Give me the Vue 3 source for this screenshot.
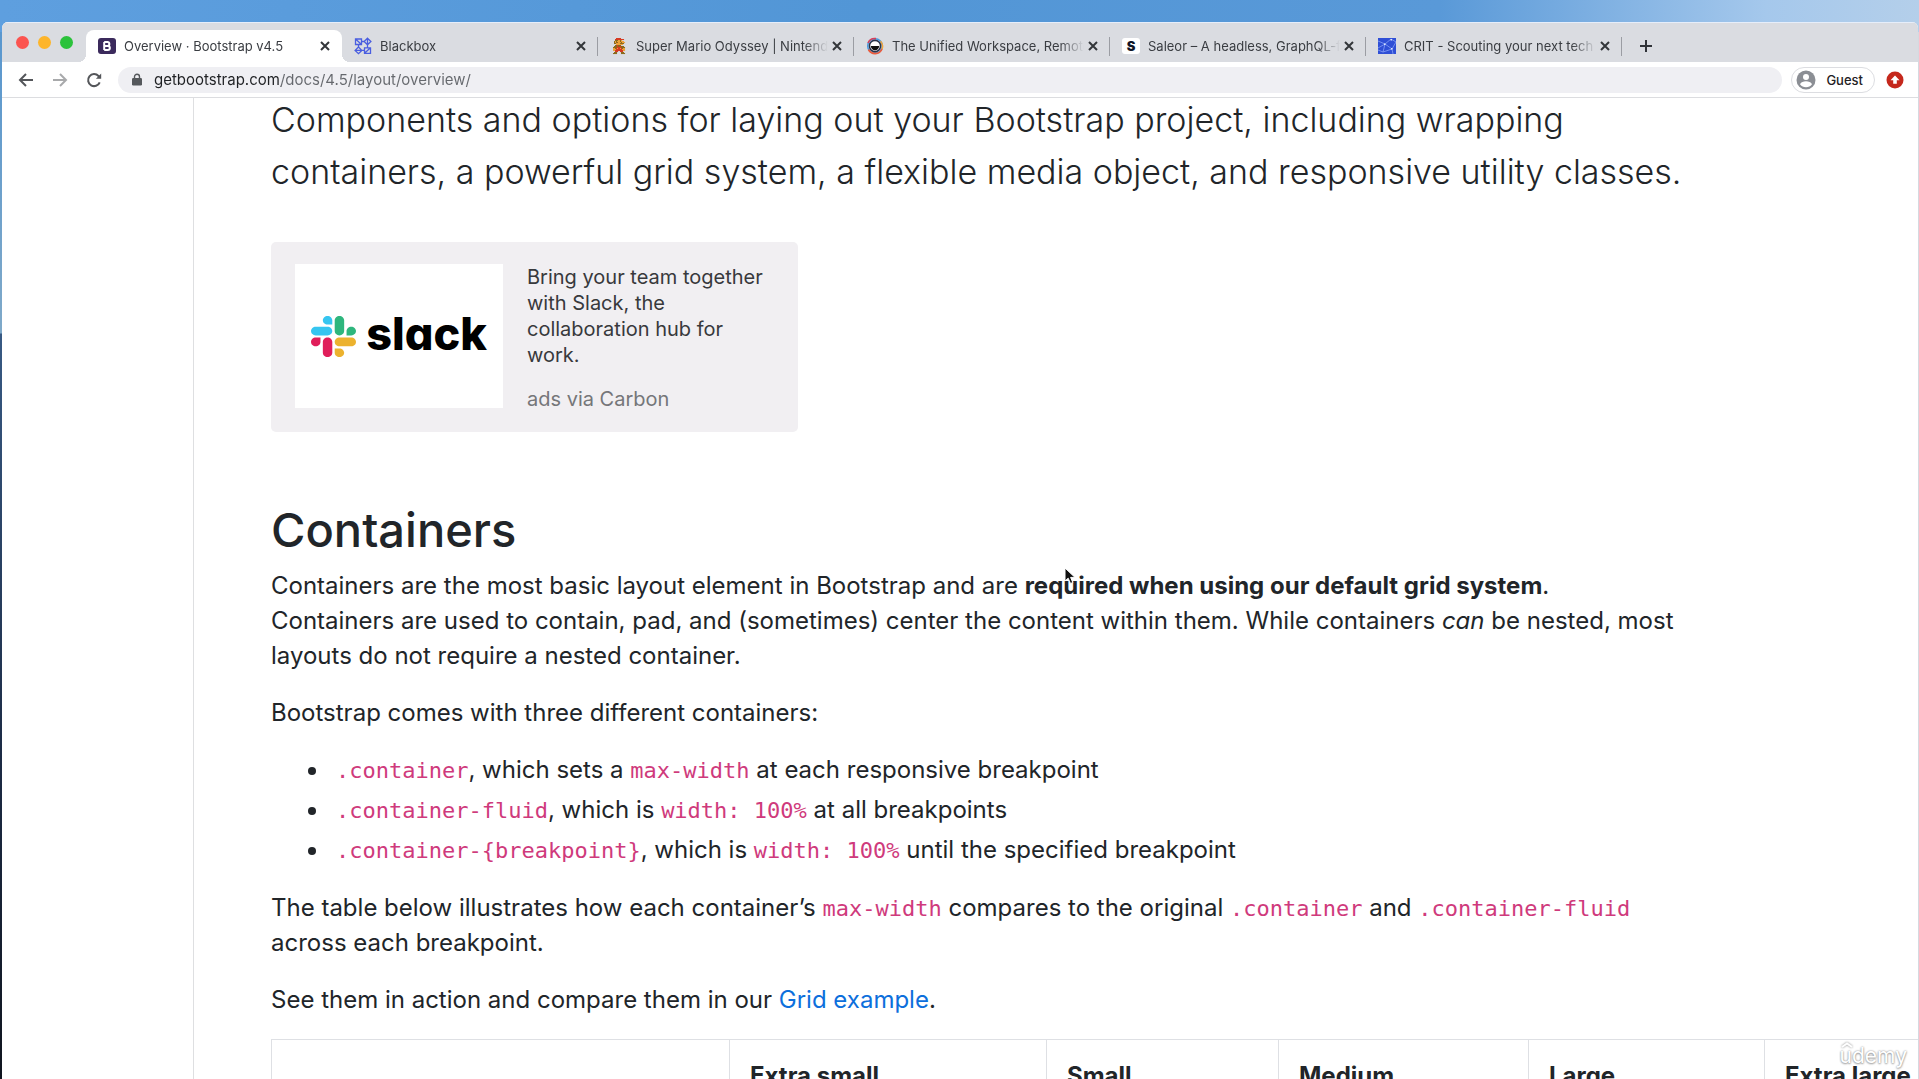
<script setup>
import { ref } from 'vue'

const address = ref('getbootstrap.com/docs/4.5/layout/overview/')

const tabs = [
  { icon: 'bootstrap', title: 'Overview · Bootstrap v4.5', active: true },
  { icon: 'blackbox', title: 'Blackbox' },
  { icon: 'mario', title: 'Super Mario Odyssey | Nintendo' },
  { icon: 'station', title: 'The Unified Workspace, Remote' },
  { icon: 'saleor', title: 'Saleor – A headless, GraphQL-first' },
  { icon: 'crit', title: 'CRIT - Scouting your next tech ta' },
]

const breakpoints = ['Extra small', 'Small', 'Medium', 'Large', 'Extra large']

// Sprite rows for the Mario favicon: r = red, s = skin, b = brown
const sprite = [
  '...rrrrr....',
  '..rrrrrrrrr.',
  '..bbbssbs...',
  '.bsbsssbsss.',
  '.bsbbsssbsss',
  '.bbssssbbbb.',
  '...sssssss..',
  '..bbrbbb....',
  '.bbbrbbrbbb.',
  'bbbbrrrrbbbb',
  'ssbrsrrsrbss',
  'sssrrrrrrsss',
  'ssrrrrrrrrss',
  '..rrr..rrr..',
  '.bbb....bbb.',
  'bbbb....bbbb',
]
const inks = { r: '#d63a22', s: '#eda13a', b: '#8a6a1c' }
const pixels = sprite.flatMap((row, y) =>
  [...row].map((c, x) => ({ x, y, fill: inks[c] })).filter((p) => p.fill),
)
</script>

<template>
  <div class="desktop">
    <div class="window">
      <header class="chrome">
        <div class="tab-strip">
          <div class="lights">
            <button class="light red" aria-label="Close window"></button>
            <button class="light yellow" aria-label="Minimize window"></button>
            <button class="light green" aria-label="Zoom window"></button>
          </div>
          <div v-for="tab in tabs" :key="tab.icon" class="tab" :class="{ active: tab.active }">
            <button class="tab-select">
              <svg v-if="tab.icon === 'bootstrap'" class="favicon" viewBox="0 0 18 18">
                <rect y="1" width="18" height="16" rx="3" fill="#3b2a5c" />
                <path d="M6.2 5v8M6.2 5h3.2a1.9 1.9 0 0 1 0 3.9H6.2h3.6a2 2 0 0 1 0 4.1H6.2" fill="none" stroke="#fff" stroke-width="2" />
              </svg>
              <svg v-else-if="tab.icon === 'blackbox'" class="favicon" viewBox="0 0 18 18" fill="none" stroke="#4a5ee0" stroke-width="1.3">
                <path d="M1.5 2h6v5.500h-6zM1.500 2l6 5.500M13.500 1.200l3.400 3.300-3.400 3.300-3.400-3.300zM13.500 1.200v6.600M4.500 10l3.300 3.400-3.300 3.200-3.400-3.200zM1 13.400h7M10.500 10.800h6v5.500h-6zM16.500 10.800l-6 5.500M7.500 4.500h2.600M7.800 13.400h2.700M4.500 7.500v2.500M13.500 7.800v3" />
              </svg>
              <svg v-else-if="tab.icon === 'mario'" class="favicon" viewBox="-3 0 18 16">
                <rect v-for="p in pixels" :key="p.x + '-' + p.y" :x="p.x" :y="p.y" width="1.05" height="1.05" :fill="p.fill" />
              </svg>
              <svg v-else-if="tab.icon === 'station'" class="favicon" viewBox="0 0 18 18">
                <circle cx="9" cy="9" r="7.300" fill="#fff" stroke="#4a9be0" stroke-width="1.600" />
                <path d="M2 6A7.500 7.500 0 0 1 10 1.600" fill="none" stroke="#d8405c" stroke-width="1.600" />
                <path d="M2.500 12.500A7.500 7.500 0 0 0 16 12" fill="none" stroke="#ec5b3c" stroke-width="1.800" />
                <path d="M14.500 4.200A7.500 7.500 0 0 1 16 12" fill="none" stroke="#f3a63a" stroke-width="1.600" />
                <circle cx="9" cy="9" r="5.600" fill="#fff" stroke="#29324a" stroke-width="1.600" />
                <path d="M4.800 9h8.400a4.200 4.200 0 0 1-8.400 0z" fill="#111" />
              </svg>
              <span v-else-if="tab.icon === 'saleor'" class="favicon letter">S</span>
              <svg v-else class="favicon" viewBox="0 0 18 18">
                <rect y="1" width="18" height="16" fill="#2f4fd6" />
                <path d="M0 4l7 3 6-5M7 7l-2 8M7 7l7 5 4-7M14 12l-9 3-5-2M14 12l1 5M7 7L0 11M13 2l5 3" fill="none" stroke="#86a0f5" stroke-width=".8" />
                <path d="M6 6.500h1.500v1.500H6zM13 11h1.500v1.500H13zM12.500 2H14v1.500h-1.500z" fill="#dfe6ff" />
              </svg>
              <span class="tab-title">{{ tab.title }}</span>
            </button>
            <button class="tab-close" aria-label="Close tab">
              <svg viewBox="0 0 10 10"><path d="M1 1l8 8M9 1l-8 8" /></svg>
            </button>
          </div>
          <button class="new-tab" aria-label="New tab">
            <svg viewBox="0 0 14 14"><path d="M7 1v12M1 7h12" /></svg>
          </button>
        </div>

        <div class="toolbar">
          <nav class="nav-buttons">
            <button aria-label="Back">
              <svg viewBox="0 0 16 16"><path d="M15 8H2M8 2L2 8l6 6" /></svg>
            </button>
            <button class="faded" aria-label="Forward">
              <svg viewBox="0 0 16 16"><path d="M1 8h13M8 2l6 6-6 6" /></svg>
            </button>
            <button aria-label="Reload">
              <svg viewBox="0 0 16 16">
                <path d="M13.700 10.300A6 6 0 1 1 12.500 4L14 5.500" />
                <path d="M15.200 1.500v5.300H9.900z" fill="#54565a" stroke="none" />
              </svg>
            </button>
          </nav>
          <label class="omnibox">
            <svg class="lock" viewBox="0 0 10 13">
              <rect y="5" width="10" height="7.500" rx="1.200" fill="#55585c" />
              <path d="M2.500 5.500V3.700a2.500 2.500 0 0 1 5 0v1.800" fill="none" stroke="#55585c" stroke-width="1.400" />
            </svg>
            <input v-model="address" type="text" aria-label="Address" spellcheck="false" />
          </label>
          <button class="profile">
            <svg viewBox="0 0 20 20">
              <circle cx="10" cy="10" r="9.500" fill="#8b8e94" />
              <circle cx="10" cy="7" r="3" fill="#fff" />
              <path d="M4 14.200c1-2.300 3.500-3 6-3s5 .7 6 3a7.300 7.300 0 0 1-12 0z" fill="#fff" />
            </svg>
            Guest
          </button>
          <button class="update" aria-label="Update browser">
            <svg viewBox="0 0 18 18">
              <circle cx="9" cy="9" r="8.500" fill="#c5281c" />
              <path d="M9 4.500l4.500 4.700h-2.700v3.600H7.200V9.200H4.500z" fill="#fff" />
            </svg>
          </button>
        </div>
      </header>

      <div class="page">
        <aside class="sidebar"></aside>
        <main class="content">
          <p class="lead">
            Components and options for laying out your Bootstrap project, including wrapping<br />
            containers, a powerful grid system, a flexible media object, and responsive utility classes.
          </p>

          <section class="ad">
            <a class="ad-image" href="#" aria-label="Slack">
              <svg class="slack-mark" viewBox="0 0 122.800 122.800" preserveAspectRatio="none">
                <path fill="#E01E5A" d="M25.800 77.600c0 7.100-5.800 12.900-12.900 12.900S0 84.700 0 77.600s5.800-12.900 12.900-12.900h12.900zM32.300 77.600c0-7.100 5.800-12.900 12.900-12.900s12.900 5.800 12.900 12.900v32.300c0 7.100-5.800 12.900-12.900 12.900s-12.900-5.800-12.900-12.900z" />
                <path fill="#36C5F0" d="M45.200 25.800c-7.100 0-12.900-5.800-12.900-12.900S38.100 0 45.200 0s12.900 5.800 12.900 12.900v12.900zM45.200 32.300c7.100 0 12.900 5.800 12.900 12.900s-5.800 12.900-12.900 12.900H12.900C5.800 58.100 0 52.300 0 45.200s5.800-12.900 12.900-12.900z" />
                <path fill="#2EB67D" d="M97 45.200c0-7.100 5.800-12.900 12.900-12.900s12.900 5.800 12.900 12.900-5.800 12.900-12.900 12.900H97zM90.500 45.200c0 7.100-5.800 12.900-12.900 12.900s-12.900-5.800-12.900-12.900V12.900C64.700 5.800 70.500 0 77.600 0s12.900 5.800 12.900 12.900z" />
                <path fill="#ECB22E" d="M77.600 97c7.100 0 12.900 5.800 12.900 12.900s-5.800 12.900-12.900 12.900-12.900-5.800-12.900-12.900V97zM77.600 90.500c-7.100 0-12.900-5.800-12.900-12.900s5.800-12.900 12.900-12.900h32.300c7.100 0 12.900 5.800 12.900 12.900s-5.800 12.900-12.900 12.900z" />
              </svg>
              <span class="slack-word">slack</span>
            </a>
            <div class="ad-copy">
              <a class="ad-text" href="#">Bring your team together<br />with Slack, the<br />collaboration hub for<br />work.</a>
              <a class="ad-via" href="#">ads via Carbon</a>
            </div>
          </section>

          <h2>Containers</h2>
          <p>
            Containers are the most basic layout element in Bootstrap and are
            <strong>required when using our default grid system</strong>.<br />
            Containers are used to contain, pad, and (sometimes) center the content within them. While containers <em>can</em> be nested, most<br />
            layouts do not require a nested container.
          </p>
          <p>Bootstrap comes with three different containers:</p>
          <ul>
            <li><code>.container</code>, which sets a <code>max-width</code> at each responsive breakpoint</li>
            <li><code>.container-fluid</code>, which is <code>width: 100%</code> at all breakpoints</li>
            <li><code>.container-{breakpoint}</code>, which is <code>width: 100%</code> until the specified breakpoint</li>
          </ul>
          <p>
            The table below illustrates how each container’s <code>max-width</code> compares to the original
            <code>.container</code> and <code>.container-fluid</code><br />
            across each breakpoint.
          </p>
          <p>See them in action and compare them in our <a href="#">Grid example</a>.</p>

          <table>
            <colgroup>
              <col class="col-name" />
              <col class="col-xs" />
              <col class="col-sm" />
              <col class="col-md" />
              <col class="col-lg" />
              <col class="col-xl" />
            </colgroup>
            <thead>
              <tr>
                <td></td>
                <th v-for="name in breakpoints" :key="name" scope="col">{{ name }}</th>
              </tr>
            </thead>
          </table>
        </main>
      </div>
    </div>

    <svg class="pointer" viewBox="0 0 12 18">
      <path d="M1 1v13l3.200-2.800 2.300 5.300 2.300-1-2.200-5.100h4.400z" fill="#111" stroke="#fff" />
    </svg>
    <div class="watermark">
      <svg viewBox="0 0 12 6"><path d="M1 5l5-3.500L11 5" /></svg>
      udemy
    </div>
  </div>
</template>

<style>
body {
  margin: 0;
}
</style>

<style scoped>
.desktop {
  position: relative;
  box-sizing: border-box;
  height: 100vh;
  padding: 22px 1px 0 2px;
  overflow: hidden;
  font-family: Inter, 'Liberation Sans', sans-serif;
  color: #212529;
  background:
    linear-gradient(90deg, #5e9fdf, #5296d6 45%, #5999d8 75%, #a5c8ec 92%, #b4cfea) top / 100% 32px no-repeat,
    linear-gradient(90deg, transparent 50%, #d5d9e0 50%),
    linear-gradient(#5595cf 0, #7fa9c9 333px, #385a84 334px, #1c2b45 70%, #10151f);
}

button {
  padding: 0;
  border: 0;
  background: none;
  font: inherit;
  color: inherit;
}

svg {
  display: block;
}

a {
  color: #0d6fdc;
  text-decoration: none;
}

.window {
  display: flex;
  flex-direction: column;
  height: 100%;
  overflow: hidden;
  border-radius: 6px 6px 0 0;
  background: #fff;
}

.chrome {
  flex: none;
  border-bottom: 1px solid #dcdde0;
}

.tab-strip {
  display: flex;
  align-items: flex-end;
  height: 40px;
  background: #dadce1;
  box-shadow: inset 0 1px #e6eefa;
}

.lights {
  display: flex;
  gap: 9px;
  align-self: center;
  width: 70px;
  padding-left: 14px;
}

.light {
  width: 13px;
  height: 13px;
  border-radius: 50%;
}

.red {
  background: #fb5450;
}

.yellow {
  background: #fdb52b;
}

.green {
  background: #2bc23b;
}

.tab {
  position: relative;
  display: flex;
  align-items: center;
  flex: 0 1 256px;
  box-sizing: border-box;
  min-width: 0;
  height: 32px;
  padding: 0 12px;
}

.tab:not(.active)::after {
  content: '';
  position: absolute;
  top: 7px;
  right: 0;
  width: 1px;
  height: 19px;
  background: #9b9da3;
}

.tab.active {
  border-radius: 8px 8px 0 0;
  background: #fff;
}

.tab.active::before,
.tab.active::after {
  content: '';
  position: absolute;
  bottom: 0;
  width: 8px;
  height: 8px;
}

.tab.active::before {
  right: 100%;
  background: radial-gradient(circle at 0 0, transparent 8px, #fff 8px);
}

.tab.active::after {
  left: 100%;
  background: radial-gradient(circle at 100% 0, transparent 8px, #fff 8px);
}

.tab-select {
  display: flex;
  flex: 1;
  gap: 8px;
  align-items: center;
  min-width: 0;
  text-align: left;
}

.favicon {
  flex: none;
  width: 18px;
  height: 18px;
}

.letter {
  height: 16px;
  border-radius: 3px;
  background: #fff;
  color: #101426;
  font-size: 13px;
  font-weight: 900;
  line-height: 16px;
  text-align: center;
}

.tab-title {
  flex: 1;
  overflow: hidden;
  color: #3a3d42;
  font-size: 13px;
  font-weight: 400;
  line-height: 20px;
  white-space: nowrap;
  mask-image: linear-gradient(90deg, #000 calc(100% - 24px), transparent);
}

.tab-close {
  flex: none;
  width: 10px;
  margin-left: 4px;
}

.tab-close svg {
  width: 10px;
  height: 10px;
  fill: none;
  stroke: #33363a;
  stroke-width: 2;
}

.new-tab {
  align-self: center;
  margin-left: 17px;
  padding-top: 8px;
}

.new-tab svg {
  width: 14px;
  height: 14px;
  fill: none;
  stroke: #303338;
  stroke-width: 2;
}

.toolbar {
  display: flex;
  align-items: center;
  height: 35px;
  padding: 0 14px 0 16px;
}

.nav-buttons {
  display: flex;
  gap: 18px;
  margin-right: 16px;
}

.nav-buttons svg {
  width: 16px;
  height: 16px;
  fill: none;
  stroke: #54565a;
  stroke-width: 2;
}

.nav-buttons .faded {
  opacity: 0.5;
}

.omnibox {
  display: flex;
  flex: 1;
  align-items: center;
  gap: 12px;
  height: 26px;
  padding: 0 14px;
  border-radius: 13px;
  background: #efeff3;
}

.lock {
  width: 10px;
  height: 13px;
}

.omnibox input {
  flex: 1;
  min-width: 0;
  padding: 0;
  border: 0;
  outline: 0;
  /* host name dark, path lighter */
  background: linear-gradient(90deg, #1f2124 127px, #65686d 127px);
  background-clip: text;
  color: transparent;
  font: 400 15px/22px Inter, 'Liberation Sans', sans-serif;
}

.profile {
  display: flex;
  align-items: center;
  gap: 10px;
  height: 26px;
  margin: 0 11px 0 9px;
  padding: 0 11px 0 4px;
  border: 1px solid #dcdde1;
  border-radius: 13px;
  color: #1f2124;
  font-size: 13px;
  font-weight: 500;
}

.profile svg {
  width: 20px;
  height: 20px;
}

.update svg {
  width: 18px;
  height: 18px;
}

.page {
  display: flex;
  flex: 1;
  min-height: 0;
  overflow: hidden;
}

.sidebar {
  flex: none;
  box-sizing: border-box;
  width: 192px;
  border-right: 1px solid #dedfe1;
}

.content {
  flex: 1;
  min-width: 0;
  margin-top: -4px;
  padding-left: 77px;
  font-size: 24px;
  line-height: 35px;
  white-space: nowrap;
}

p {
  margin: 0 0 22px;
}

.lead {
  margin-bottom: 44px;
  font-size: 34px;
  font-weight: 300;
  line-height: 52px;
}

.ad {
  display: flex;
  gap: 24px;
  align-items: flex-start;
  box-sizing: border-box;
  width: 527px;
  max-width: 100%;
  margin-bottom: 68px;
  padding: 22px 24px 20px;
  border-radius: 5px;
  background: #f1eff2;
}

.ad-image {
  display: flex;
  flex: none;
  align-items: center;
  justify-content: center;
  gap: 10px;
  width: 208px;
  height: 144px;
  background: #fff;
}

.slack-mark {
  width: 45px;
  height: 41px;
}

.slack-word {
  padding-bottom: 4px;
  color: #000;
  font-size: 45px;
  font-weight: 800;
  font-feature-settings: 'cv11';
  line-height: 48px;
}

.ad-copy {
  display: flex;
  flex-direction: column;
  gap: 18px;
  font-size: 20px;
  line-height: 26px;
}

.ad-text {
  color: #38393c;
}

.ad-via {
  color: #757679;
}

h2 {
  margin: 0 0 8px;
  font-size: 47px;
  font-weight: 500;
  line-height: 60px;
}

strong {
  font-weight: 700;
}

ul {
  margin: 0 0 23px;
  padding-left: 65px;
  list-style: none;
}

li + li {
  margin-top: 5px;
}

li::before {
  content: '';
  display: inline-block;
  width: 8px;
  height: 8px;
  margin: 0 20px 0 -28px;
  border-radius: 50%;
  background: #212529;
  vertical-align: middle;
}

code {
  color: #cf3a7c;
  font-family: 'DejaVu Sans Mono', 'Liberation Mono', monospace;
  font-size: 22px;
  line-height: 1;
}

table {
  width: 1720px;
  border-collapse: collapse;
  table-layout: fixed;
}

.col-name {
  width: 458px;
}

.col-xs {
  width: 317px;
}

.col-sm {
  width: 232px;
}

.col-md {
  width: 250px;
}

.col-lg {
  width: 236px;
}

td,
th {
  padding: 18px 20px;
  border: 1px solid #dee0e4;
  font-weight: 700;
  text-align: left;
}

.pointer {
  position: absolute;
  top: 567px;
  left: 1064px;
  width: 12px;
  height: 18px;
}

.watermark {
  position: absolute;
  right: 12px;
  bottom: 9px;
  color: #fff;
  font-size: 21px;
  font-weight: 400;
  line-height: 28px;
  text-shadow: 0 0 2px #8a8a8a, 0 1px 2px #aaa;
}

.watermark svg {
  position: absolute;
  top: 0;
  left: 1px;
  width: 12px;
  height: 6px;
  fill: none;
  stroke: #fff;
  stroke-width: 2;
  filter: drop-shadow(0 0 1px #888);
}
</style>
